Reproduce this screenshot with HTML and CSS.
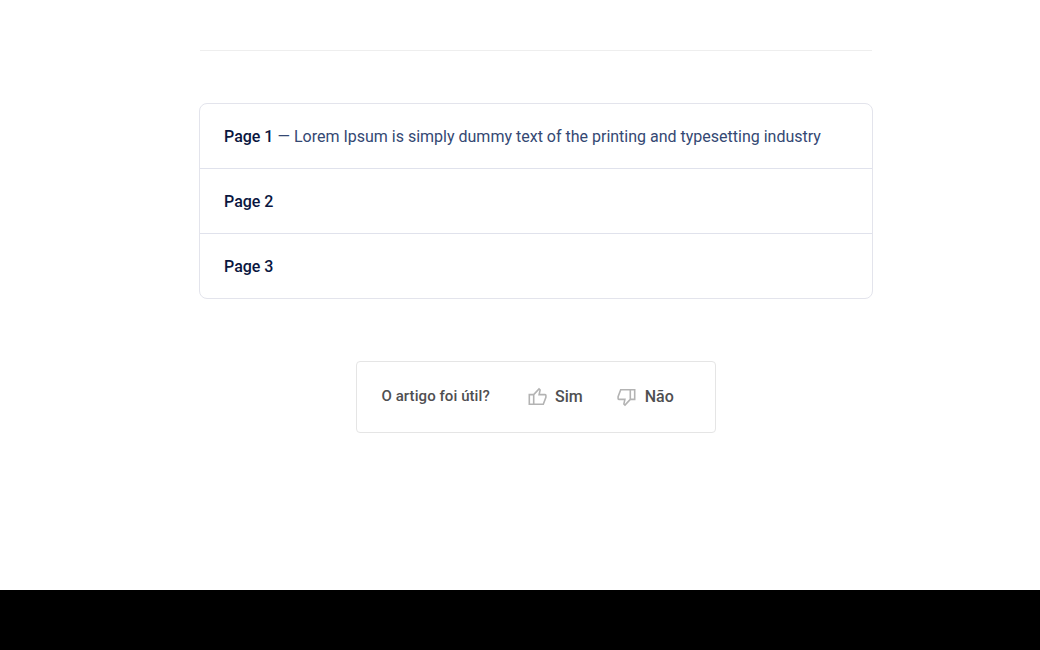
FILE: index.html
```html
<!DOCTYPE html>
<html lang="pt">
<head>
<meta charset="utf-8">
<title>Artigo</title>
<link rel="stylesheet" href="styles.css">
</head>
<body>
<main class="article">
  <hr class="divider">
  <nav class="pages">
    <a class="page"><strong class="page-title">Page 1</strong> — Lorem Ipsum is simply dummy text of the printing and typesetting industry</a>
    <a class="page"><strong class="page-title">Page 2</strong></a>
    <a class="page"><strong class="page-title">Page 3</strong></a>
  </nav>
  <section class="feedback">
    <span class="question">O artigo foi útil?</span>
    <button class="vote yes"><svg class="icon" viewBox="0 0 20 20"><path d="M1.300 7.600h4.400v9.600h-4.400zM5.700 7.600l5.300-5.600 1.100 1.100-1 4.500h6q.8 0 .8.800v2l-2.600 6.800h-9.600"/></svg>Sim</button>
    <button class="vote no"><svg class="icon flipped" viewBox="0 0 20 20"><path d="M1.300 7.600h4.400v9.600h-4.400zM5.700 7.600l5.300-5.600 1.100 1.100-1 4.500h6q.8 0 .8.800v2l-2.600 6.800h-9.600"/></svg>Não</button>
  </section>
</main>
<footer class="footer"></footer>
</body>
</html>
```

FILE: styles.css
```css
* { box-sizing: border-box; }
body { margin: 0; height: 650px; display: flex; flex-direction: column; background: #fff; font-family: Roboto, sans-serif; }
.article { width: 674px; height: 590px; margin-left: 199px; padding-top: 50px; }
.divider { margin: 0 1px 52px; border: 0; border-top: 1px solid #eee; }
.pages { border: 1px solid #e3e4ec; border-radius: 8px; }
.page { display: block; height: 65px; padding: 21px 24px 19px; font-size: 16px; line-height: 24px; font-weight: 400; color: #344873; }
.page + .page { border-top: 1px solid #e0e2ec; }
.page:first-child { height: 64px; }
.page-title { font-weight: 500; color: #0a1640; }
.feedback { width: 360px; height: 72px; margin: 62px auto 0 157px; padding: 0 24px; border: 1px solid #e5e5e5; border-radius: 4px; display: flex; align-items: center; }
.question { width: 147px; padding: 0 0 2px .5px; font-size: 15px; letter-spacing: .07px; font-weight: 500; color: #4f4f51; }
.vote { display: flex; align-items: center; gap: 7px; padding: 0; border: 0; background: none; font: 500 16px/20px Roboto, sans-serif; color: #4f4f51; }
.no { margin-left: 33px; gap: 9px; }
.icon { width: 20px; height: 20px; fill: none; stroke: #b3b3b3; stroke-width: 1.600; }
.flipped { transform: rotate(180deg); }
.footer { height: 60px; background: #000; }
```
